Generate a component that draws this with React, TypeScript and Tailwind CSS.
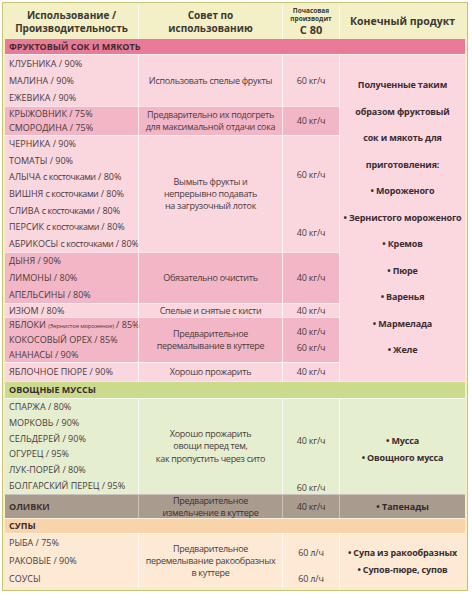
import React from "react";

type Group = {
  h: string;
  bg: string;
  items: React.ReactNode[];
  advice: string[];
  rates: React.ReactNode;
};

// lowercase part of the fruit names is set tighter, as in the print
const kost = (name: string) => (
  <span>
    {name} <span className="tracking-[-0.45px]">с косточками</span> / 80%
  </span>
);

const fruit: Group[] = [
  {
    h: "h-[52px]",
    bg: "bg-[#fad6de]",
    items: ["КЛУБНИКА / 90%", "МАЛИНА / 90%", "ЕЖЕВИКА / 90%"],
    advice: ["Использовать спелые фрукты"],
    rates: <span>60 кг/ч</span>,
  },
  {
    h: "h-[29px]",
    bg: "bg-[#f3b6c6]",
    items: ["КРЫЖОВНИК / 75%", "СМОРОДИНА / 75%"],
    advice: ["Предварительно их подогреть", "для максимальной отдачи сока"],
    rates: <span>40 кг/ч</span>,
  },
  {
    h: "h-[117px]",
    bg: "bg-[#fad6de]",
    items: [
      "ЧЕРНИКА / 90%",
      "ТОМАТЫ / 90%",
      kost("АЛЫЧА"),
      kost("ВИШНЯ"),
      kost("СЛИВА"),
      kost("ПЕРСИК"),
      kost("АБРИКОСЫ"),
    ],
    advice: ["Вымыть фрукты и", "непрерывно подавать", "на загрузочный лоток"],
    rates: (
      <div className="flex h-full flex-col items-center pt-[33px] gap-[46px]">
        <span>60 кг/ч</span>
        <span>40 кг/ч</span>
      </div>
    ),
  },
  {
    h: "h-[51px]",
    bg: "bg-[#f3b6c6]",
    items: ["ДЫНЯ / 90%", "ЛИМОНЫ / 80%", "АПЕЛЬСИНЫ / 80%"],
    advice: ["Обязательно очистить"],
    rates: <span>40 кг/ч</span>,
  },
  {
    h: "h-[14px]",
    bg: "bg-[#fad6de]",
    items: ["ИЗЮМ / 80%"],
    advice: ["Спелые и снятые с кисти"],
    rates: <span>40 кг/ч</span>,
  },
  {
    h: "h-[45px]",
    bg: "bg-[#f3b6c6]",
    items: [
      <span key="a">
        ЯБЛОКИ <span className="text-[6px] tracking-[-0.2px]">(Зернистое мороженое)</span> / 85%
      </span>,
      "КОКОСОВЫЙ ОРЕХ / 85%",
      "АНАНАСЫ / 90%",
    ],
    advice: ["Предварительное", "перемалывание в куттере"],
    rates: (
      <div className="flex flex-col items-center leading-[16px]">
        <span>40 кг/ч</span>
        <span>60 кг/ч</span>
      </div>
    ),
  },
  {
    h: "h-[19px]",
    bg: "bg-[#fad6de]",
    items: ["ЯБЛОЧНОЕ ПЮРЕ / 90%"],
    advice: ["Хорошо прожарить"],
    rates: <span>40 кг/ч</span>,
  },
];

const fruitProducts = [
  "Полученные таким",
  "образом фруктовый",
  "сок и мякоть для",
  "приготовления:",
  "• Мороженого",
  "• Зернистого мороженого",
  "• Кремов",
  "• Пюре",
  "• Варенья",
  "• Мармелада",
  "• Желе",
];

function GroupRow({ g }: { g: Group }) {
  return (
    <div className={`flex ${g.h} ${g.bg} border-t border-white/60`}>
      <div className="flex w-[133px] flex-col justify-around pl-[4px] whitespace-nowrap">
        {g.items.map((it, i) => (
          <div key={i} className="leading-[12px]">
            {it}
          </div>
        ))}
      </div>
      <div className="flex w-[144px] flex-col items-center justify-center border-l border-white/70 text-center leading-[12px] tracking-[-0.3px]">
        {g.advice.map((a) => (
          <div key={a}>{a}</div>
        ))}
      </div>
      <div className="flex w-[57px] items-center justify-center border-l border-white/70 leading-[12px] tracking-[-0.2px]">
        {g.rates}
      </div>
    </div>
  );
}

function SectionBar({ label, bg, h }: { label: string; bg: string; h: string }) {
  return (
    <div className={`flex ${h} items-center ${bg} pl-[4px] font-bold text-[#3d2b31] border-t border-white/60`}>
      {label}
    </div>
  );
}

export default function App() {
  return (
    <div className="min-h-[600px] bg-white pt-[2px] pl-[2px] [font-family:'Open_Sans',sans-serif] text-[9px] text-[#4a3b40]">
      <div className="w-[466px] border border-[#c9c27c] bg-[#f6f0c0] p-[2px]">
        {/* header */}
        <div className="flex h-[34px] bg-[#f3efc6] font-bold text-[#3b3830]">
          <div className="flex w-[133px] flex-col items-center justify-center text-[10px] leading-[13px]">
            <span>Использование /</span>
            <span>Производительность</span>
          </div>
          <div className="flex w-[144px] flex-col items-center justify-center border-l border-white/80 text-[10px] leading-[13px]">
            <span>Совет по</span>
            <span>использованию</span>
          </div>
          <div className="flex w-[57px] flex-col items-center justify-center border-l border-white/80 pb-[1px]">
            <span className="text-[6.5px] leading-[8px]">Почасовая</span>
            <span className="text-[6.5px] leading-[8px]">производит</span>
            <span className="text-[11px] leading-[13px]">С 80</span>
          </div>
          <div className="flex w-[126px] items-center justify-center border-l border-white/80 text-[10.5px]">
            Конечный продукт
          </div>
        </div>

        {/* fruit */}
        <div className="flex h-[15px] items-center bg-[#e97b98] pl-[4px] font-bold text-[#3d2b31]">
          ФРУКТОВЫЙ СОК И МЯКОТЬ
        </div>
        <div className="flex">
          <div className="w-[334px]">
            {fruit.map((g, i) => (
              <GroupRow key={i} g={g} />
            ))}
          </div>
          <div className="flex h-[327px] w-[126px] flex-col items-center justify-center border-l border-t border-white/60 bg-[#fbd8e0] font-bold text-[#3a2c31] leading-[26.5px] tracking-[-0.15px]">
            {fruitProducts.map((p) => (
              <div key={p}>{p}</div>
            ))}
          </div>
        </div>

        {/* vegetables */}
        <SectionBar label="ОВОЩНЫЕ МУССЫ" bg="bg-[#c9dc8e]" h="h-[17px]" />
        <div className="flex h-[96px] bg-[#e5eecf] border-t border-white/60">
          <div className="flex w-[133px] flex-col justify-around pl-[4px] leading-[12px] whitespace-nowrap">
            <div>СПАРЖА / 80%</div>
            <div>МОРКОВЬ / 90%</div>
            <div>СЕЛЬДЕРЕЙ / 90%</div>
            <div>ОГУРЕЦ / 95%</div>
            <div>ЛУК-ПОРЕЙ / 80%</div>
            <div>БОЛГАРСКИЙ ПЕРЕЦ / 95%</div>
          </div>
          <div className="flex w-[144px] flex-col items-center justify-center border-l border-white/70 text-center leading-[12.5px] tracking-[-0.3px]">
            <div>Хорошо прожарить</div>
            <div>овощи перед тем,</div>
            <div>как пропустить через сито</div>
          </div>
          <div className="flex w-[57px] flex-col items-center border-l border-white/70 pt-[36px] gap-[35px] leading-[12px] tracking-[-0.2px]">
            <span>40 кг/ч</span>
            <span>60 кг/ч</span>
          </div>
          <div className="flex w-[126px] flex-col items-center justify-center border-l border-white/70 pt-[4px] font-bold text-[#3a2c31] leading-[17px] tracking-[-0.15px]">
            <div>• Мусса</div>
            <div>• Овощного мусса</div>
          </div>
        </div>

        {/* olives */}
        <div className="flex h-[24px] bg-[#a99c8f] border-t border-white/40">
          <div className="flex w-[133px] items-center pl-[4px] font-bold text-[#3b2f30]">ОЛИВКИ</div>
          <div className="flex w-[144px] flex-col items-center justify-center border-l border-white/40 text-center leading-[11.5px] tracking-[-0.3px] text-[#3b2f30]">
            <div>Предварительное</div>
            <div>измельчение в куттере</div>
          </div>
          <div className="flex w-[57px] items-center justify-center border-l border-white/40 tracking-[-0.2px] text-[#3b2f30]">
            40 кг/ч
          </div>
          <div className="flex w-[126px] items-center justify-center border-l border-white/40 font-bold text-[#32282a]">
            • Тапенады
          </div>
        </div>

        {/* soups */}
        <SectionBar label="СУПЫ" bg="bg-[#f9d3aa]" h="h-[15px]" />
        <div className="flex h-[55px] bg-[#fde9d4] border-t border-white/60">
          <div className="flex w-[133px] flex-col justify-around pl-[4px] leading-[12px]">
            <div>РЫБА / 75%</div>
            <div>РАКОВЫЕ / 90%</div>
            <div>СОУСЫ</div>
          </div>
          <div className="flex w-[144px] flex-col items-center justify-center border-l border-white/70 text-center leading-[12px] tracking-[-0.3px]">
            <div>Предварительное</div>
            <div>перемелывание ракообразных</div>
            <div>в куттере</div>
          </div>
          <div className="flex w-[57px] flex-col items-center border-l border-white/70 pt-[13px] gap-[14px] leading-[12px] tracking-[-0.2px]">
            <span>60 л/ч</span>
            <span>60 л/ч</span>
          </div>
          <div className="flex w-[126px] flex-col items-center justify-center border-l border-white/70 font-bold text-[#3a2c31] leading-[17px] tracking-[-0.15px]">
            <div>• Супа из ракообразных</div>
            <div>• Супов-пюре, супов</div>
          </div>
        </div>
      </div>
    </div>
  );
}
